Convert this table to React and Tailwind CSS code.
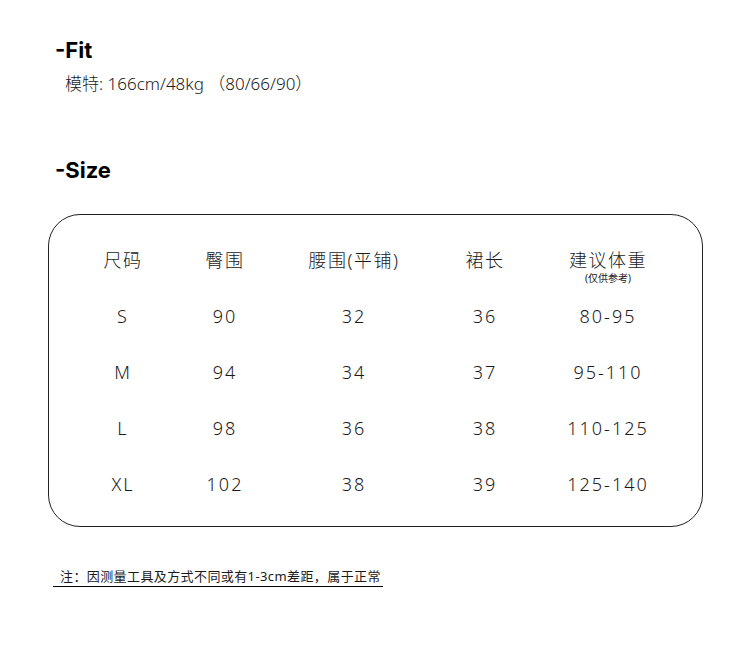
import React from 'react';

const cols = ['w-[100px]', 'w-[104px]', 'w-[154px]', 'w-[108px]', 'w-[138px]'];

const rows = [
  ['S', '90', '32', '36', '80-95'],
  ['M', '94', '34', '37', '95-110'],
  ['L', '98', '36', '38', '110-125'],
  ['XL', '102', '38', '39', '125-140'],
];

function Row({ cells }) {
  return (
    <div className="flex h-14 items-center tracking-[2px]">
      {cells.map((c, i) => (
        <div key={i} className={`${cols[i]} text-center`}>
          {c}
        </div>
      ))}
    </div>
  );
}

export default function App() {
  return (
    <div
      className="w-[750px] h-[653px] bg-white text-[#1a1a1a] relative"
      style={{ fontFamily: '"Noto Sans", "Noto Sans CJK SC", sans-serif' }}
    >
      {/* Fit */}
      <div className="pt-[35px] pl-[55px]">
        <h2 className="text-[22px] font-bold leading-[30px] text-black font-['Inter']">-Fit</h2>
        <p className="pl-[10px] mt-[8px] text-[17px] leading-[22px] font-light">
          模特: 166cm/48kg （80/66/90）
        </p>
      </div>

      {/* Size */}
      <div className="pl-[55px] mt-[60px]">
        <h2 className="text-[22px] font-bold leading-[30px] text-black font-['Inter']">-Size</h2>
      </div>

      <div className="ml-[48px] mt-[29px] w-[655px] h-[313px] rounded-[32px] border border-[#222] pl-[24px] pt-[17px] text-[18px] font-light">
        <div className="flex h-14 items-center tracking-[1.5px]">
          <div className={`${cols[0]} text-center`}>尺码</div>
          <div className={`${cols[1]} text-center`}>臀围</div>
          <div className={`${cols[2]} text-center`}>腰围(平铺)</div>
          <div className={`${cols[3]} text-center`}>裙长</div>
          <div className={`${cols[4]} text-center`}>
            <span className="relative inline-block">
              建议体重
              <span className="absolute left-0 right-0 top-[25px] text-[10px] leading-[12px] font-normal tracking-normal">
                (仅供参考)
              </span>
            </span>
          </div>
        </div>
        {rows.map((r) => (
          <Row key={r[0]} cells={r} />
        ))}
      </div>

      {/* note */}
      <div className="ml-[53px] mt-[41px] inline-block border-b border-black pl-[7px] pr-[2px] text-[13px] leading-[17px] pb-[1px] font-normal tracking-[0.4px]">
        注：因测量工具及方式不同或有1-3cm差距，属于正常
      </div>
    </div>
  );
}
